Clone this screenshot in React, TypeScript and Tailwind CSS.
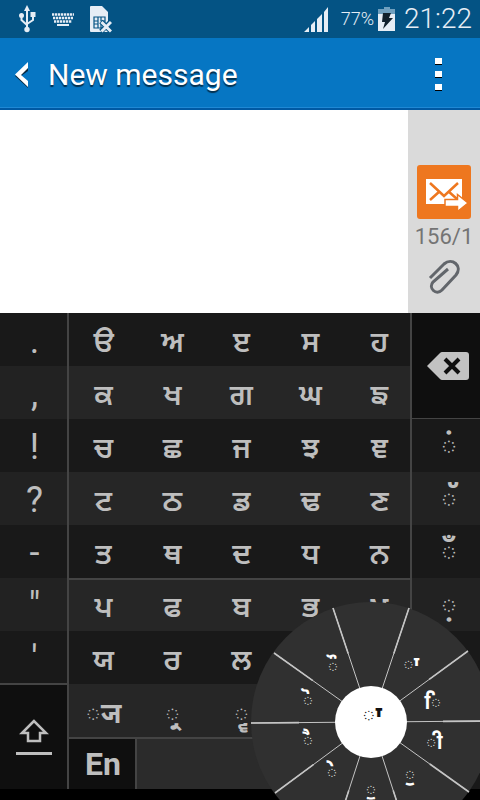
import React from "react";

const gurmukhi = "font-['Noto_Sans_Gurmukhi','Noto_Sans','FreeSans','Liberation_Sans',sans-serif]";

const punctuation = [".", ",", "!", "?", "-", '"', "'"];

const letterRows = [
  ["ੳ", "ਅ", "ੲ", "ਸ", "ਹ"],
  ["ਕ", "ਖ", "ਗ", "ਘ", "ਙ"],
  ["ਚ", "ਛ", "ਜ", "ਝ", "ਞ"],
  ["ਟ", "ਠ", "ਡ", "ਢ", "ਣ"],
  ["ਤ", "ਥ", "ਦ", "ਧ", "ਨ"],
  ["ਪ", "ਫ", "ਬ", "ਭ", "ਮ"],
  ["ਯ", "ਰ", "ਲ"],
  ["◌੍ਯ", "◌੍ਰ", "◌੍ਵ"],
];

const signs = ["◌ਂ", "◌ੱ", "◌ਁ", "◌਼"];

const spokes = [
  [38, -114],
  [97, -71],
  [120, -1],
  [98, 70],
  [37, 114],
  [-37, 114],
  [-96, 71],
  [-120, 1],
  [-97, -69],
  [-38, -114],
];

const wheelVowels: { sign: string; x: number; y: number }[] = [
  { sign: "◌ਾ", x: 160, y: 62 },
  { sign: "◌ਿ", x: 182, y: 100 },
  { sign: "◌ੀ", x: 183, y: 140 },
  { sign: "◌ੁ", x: 159, y: 172 },
  { sign: "◌ੂ", x: 120, y: 187 },
  { sign: "◌ੇ", x: 81, y: 170 },
  { sign: "◌ੈ", x: 57, y: 138 },
  { sign: "◌ੋ", x: 57, y: 98 },
  { sign: "◌ੌ", x: 82, y: 64 },
];

function StatusBar() {
  return (
    <div className="flex h-[38px] shrink-0 items-center justify-between bg-[#045384] pl-[18px] pr-2 text-[#e6edf5]">
      <div className="flex items-center gap-4">
        <svg width="18" height="28" viewBox="0 0 18 28" fill="none" stroke="currentColor" strokeWidth="2" aria-label="USB connected">
          <path d="M9 5v19M3.500 11v4l5.500 5M15 10v5l-6 4" />
          <path d="M9 0l3 6H6z" fill="currentColor" stroke="none" />
          <circle cx="3.500" cy="10.500" r="2.500" fill="currentColor" stroke="none" />
          <circle cx="9" cy="24.500" r="2.700" fill="currentColor" stroke="none" />
          <path d="M12.500 7h5v5h-5z" fill="currentColor" stroke="none" />
        </svg>
        <svg width="22" height="13" viewBox="0 0 22 13" fill="none" stroke="currentColor" strokeWidth="2.500" aria-label="Keyboard">
          <path d="M0 1.500h22M1 5h20M2 8.500h18" strokeDasharray="2.300 .7" />
          <path d="M5 12h12" strokeWidth="2" />
        </svg>
        <svg width="22" height="27" viewBox="0 0 22 27" aria-label="No SIM card">
          <path d="M1 0h11l6 6v20H1q-1 0-1-1V1q0-1 1-1z" fill="currentColor" />
          <path d="M4 11h11v11H4zM8 11v11M11 11v4h4M4 15h4M4 18h4M11 22v-4h4" fill="none" stroke="#045384" strokeWidth="1.200" />
          <path d="M11 15.500l10 10M21 15.500l-10 10" stroke="#045384" strokeWidth="5" />
          <path d="M11.500 16l9.500 9.500M21 16l-9.500 9.500" stroke="currentColor" strokeWidth="3" />
        </svg>
      </div>
      <div className="flex items-center">
        <svg width="24" height="25" viewBox="0 0 24 25" fill="currentColor" aria-label="Signal strength">
          <path d="M0 25l5-5v5zM7 18l4-4v11H7zM13 12l5-5v18h-5zM20 5l4-5v25h-4z" />
        </svg>
        <span className="ml-[13px] text-lg font-light">77%</span>
        <svg className="ml-1" width="18" height="24" viewBox="0 0 18 24" aria-label="Charging">
          <path d="M6 0h6v2h5v5H0V2h6z" fill="#6f9fbe" />
          <path d="M0 7h17v17H0z" fill="currentColor" />
          <path d="M5 6h8l-2 5h4L5 22l2-7H4z" fill="#10202c" />
        </svg>
        <span className="ml-2 text-[28px] leading-8 font-light">21:22</span>
      </div>
    </div>
  );
}

function Header() {
  return (
    <header className="flex h-[72px] shrink-0 items-center border-b-2 border-[#0059a3] bg-[#0676c3] pt-[3px] pr-[32px] pl-[14px] text-white shadow-[inset_0_-1px_0_#1f88d4]">
      <button aria-label="Back" className="flex h-12 w-[34px] items-center">
        <svg width="16" height="26" viewBox="0 0 16 26">
          <path d="M14 2v7l-7 5 7 7v5L1 14z" fill="#0b2a40" />
          <path d="M14 0v6l-7 7 7 6v6L1 12.500z" fill="#fff" />
        </svg>
      </button>
      <h1 className="flex-1 text-[30px] leading-9 [text-shadow:0_2px_1px_rgba(0,0,0,0.6)]">New message</h1>
      <button aria-label="More options" className="flex h-12 w-5 flex-col items-center justify-center gap-[6px]">
        <span className="h-[7px] w-[7px] border-b border-black bg-white" />
        <span className="h-[7px] w-[7px] border-b border-black bg-white" />
        <span className="h-[7px] w-[7px] border-b border-black bg-white" />
      </button>
    </header>
  );
}

function Compose() {
  return (
    <main className="flex min-h-[203px] flex-1 bg-white">
      <textarea aria-label="Enter message" className="min-w-0 flex-1 resize-none p-3 text-2xl text-black outline-none" />
      <div className="flex w-[72px] flex-col items-center justify-end bg-[#dadada] pb-[18px]">
        <button aria-label="Send" className="h-[54px] w-[54px] rounded-[3px] bg-[#ee771f]">
          <svg width="54" height="54" viewBox="0 0 54 54" fill="none">
            <path d="M9 14h36v25H9z" fill="#fff" />
            <path d="M13 18l14 13 14-13M13 35l10-9M40 34l-9-8" stroke="#ee771f" strokeWidth="2.500" />
            <path d="M28 34.500h12.500v-5L51 38l-10.500 8.500v-5H28z" fill="#fff" stroke="#ee771f" strokeWidth="1.500" />
          </svg>
        </button>
        <span className="mt-[5px] text-[22px] leading-[26px] text-[#747474]">156/1</span>
        <button aria-label="Attach" className="mt-[9px]">
          <svg width="32" height="36" viewBox="0 0 32 36" fill="none" stroke="#62666b" strokeWidth="3">
            <path d="M2 19L16 5c8-7 19 2 12 11L14 31c-6 6-14-2-9-8L20 10" />
          </svg>
        </button>
      </div>
    </main>
  );
}

const keyText = "flex h-[53px] items-center justify-center text-[#bebebe]";

function Wheel() {
  return (
    <svg className="absolute -right-[11px] -bottom-[42px]" width="240" height="240" viewBox="0 0 240 240" role="group" aria-label="Vowel signs">
      <circle cx="120" cy="120" r="120" fill="#303030" />
      {spokes.map(([x, y]) => (
        <g key={`${x},${y}`} stroke="#c4c4c4">
          <path d={`M120 120L${120 + x} ${120 + y}`} strokeWidth="1" />
          <path d={`M${120 + x * 0.6} ${120 + y * 0.6}L${120 + x} ${120 + y}`} strokeWidth="1.600" />
        </g>
      ))}
      <circle cx="120" cy="120" r="36" fill="#fff" />
      <g className={`${gurmukhi} font-bold`} textAnchor="middle" fontSize="20" fill="#fff">
        {wheelVowels.map((v) => (
          <text key={v.sign} x={v.x} y={v.y + 7}>
            {v.sign}
          </text>
        ))}
        <text x="121" y="121" fontSize="24" fill="#111">
          ◌ਾ
        </text>
      </g>
    </svg>
  );
}

function Keyboard() {
  return (
    <section aria-label="Keyboard" className="relative shrink-0 bg-black pb-[11px]">
      <div className="grid grid-cols-[69fr_341fr_70fr]">
        <div className="flex flex-col border-r-2 border-[#444]">
          {punctuation.map((p) => (
            <button key={p} className={`${keyText} pt-0.5 pl-0.5 text-4xl odd:bg-[#191919] even:bg-[#222]`}>
              {p}
            </button>
          ))}
          <button aria-label="Shift" className="-mt-px flex flex-1 flex-col items-center justify-center gap-[9px] border-t-2 border-[#444] bg-[#0f0f0f]">
            <svg width="30" height="24" viewBox="0 0 30 24" fill="none" stroke="#bebebe" strokeWidth="2.500">
              <path d="M15 2L3 14h6v8h12v-8h6z" />
            </svg>
            <span className="h-[3px] w-9 bg-[#bebebe]" />
          </button>
        </div>

        <div className="flex min-w-0 flex-col">
          {letterRows.map((row, r) => (
            <div
              key={r}
              className={`-mr-1 grid h-[53px] grid-cols-5 odd:bg-[#191919] even:bg-[#262626] ${r === 5 ? "border-t-2 border-[#444]" : ""}`}
            >
              {row.map((c) => (
                <button
                  key={c}
                  className={`${keyText} ${gurmukhi} ${r === 7 ? "pt-2.5 text-[28px] font-bold" : "pt-3 text-[29px] font-semibold"} ${r === 5 ? "-mt-0.5" : ""}`}
                >
                  {c}
                </button>
              ))}
            </div>
          ))}
          <div className="grid flex-1 grid-cols-[68fr_273fr] border-t-2 border-[#444]">
            <button className="h-[50px] border-r-2 border-[#444] bg-[#0f0f0f] pl-0.5 text-[32px] leading-9 font-bold text-[#bebebe]">En</button>
            <button aria-label="Space" className="bg-[#2b2b2b]" />
          </div>
        </div>

        <div className="relative flex flex-col border-l-2 border-[#444]">
          <button aria-label="Delete" className="-mb-px flex h-[107px] items-center justify-center border-b-2 border-[#444] bg-[#0f0f0f] pl-1">
            <svg width="42" height="28" viewBox="0 0 42 28">
              <path d="M0 14L13 1q1-1 2-1h24q3 0 3 3v22q0 3-3 3H15q-1 0-2-1z" fill="#c2c2c2" />
              <path d="M18 7l14 14M32 7L18 21" stroke="#0f0f0f" strokeWidth="4" />
            </svg>
          </button>
          {signs.map((s) => (
            <button key={s} className={`${keyText} ${gurmukhi} pt-1.5 pl-1.5 text-[30px] font-bold odd:bg-[#222] even:bg-[#191919]`}>
              {s}
            </button>
          ))}
          <div className="flex-1 bg-[#191919]" />
        </div>
      </div>
      <Wheel />
    </section>
  );
}

export default function App() {
  return (
    <div className="flex min-h-screen flex-col overflow-hidden bg-black font-[Roboto,sans-serif]">
      <StatusBar />
      <Header />
      <Compose />
      <Keyboard />
    </div>
  );
}
